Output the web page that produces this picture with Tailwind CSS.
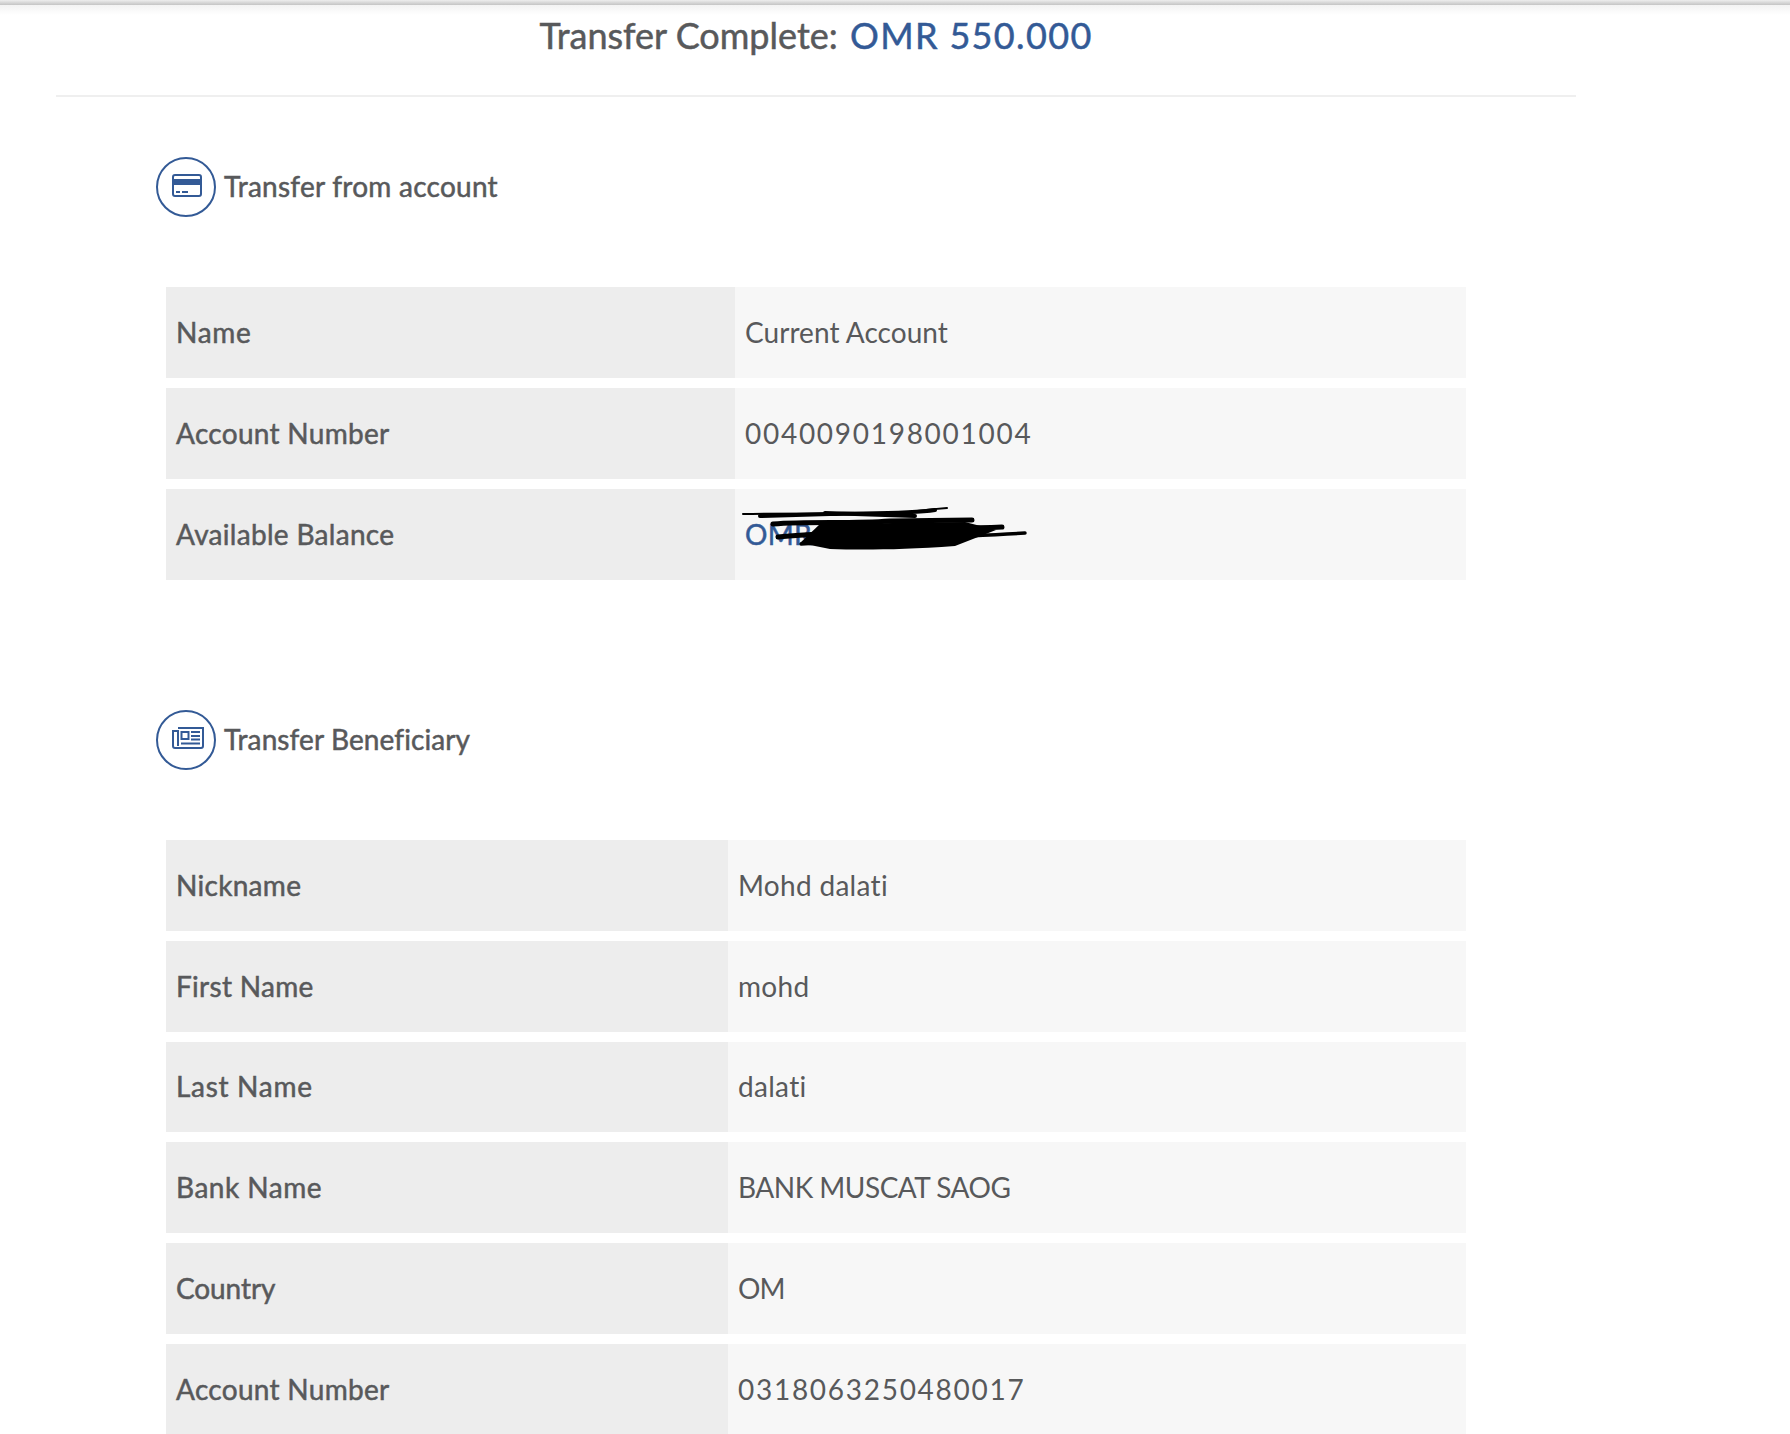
<!DOCTYPE html>
<html lang="en">
<head>
  <meta charset="UTF-8" />
  <title>Transfer Complete</title>
  <script src="https://cdn.jsdelivr.net/npm/@tailwindcss/browser@4"></script>
</head>
<body class="bg-white h-[1434px] overflow-hidden font-['Lato',sans-serif] text-[#58595b] [font-variant-ligatures:none]">

  <div class="h-[5px] bg-gradient-to-b from-[#eeeeee] to-[#c4c4c4]"></div>
  <div class="h-[10px] -mb-[10px] bg-gradient-to-b from-[#f3f3f3] to-white"></div>

  <div class="w-[1520px] ml-[56px]">
    <h1 class="h-[92px] border-b-2 border-[#efefef] pt-[3px] text-center text-[36px] leading-[54px] [-webkit-text-stroke:0.5px]">
      Transfer Complete: <span class="text-[#335a96] tracking-[1.35px] ml-[3px]">OMR 550.000</span>
    </h1>
  </div>

  <section class="ml-[156px] mt-[60px] flex items-center gap-[8px] h-[60px]">
    <span class="w-[60px] h-[60px] rounded-full border-2 border-[#335a96] flex items-center justify-center">
      <svg width="32" height="25" viewBox="0 0 32 25" class="ml-[2px] -mt-[3px]">
        <rect x="2" y="2" width="28" height="21" rx="2" fill="none" stroke="#335a96" stroke-width="2"/>
        <rect x="2" y="6" width="28" height="6" fill="#335a96"/>
        <rect x="5" y="18" width="4" height="2" fill="#335a96"/>
        <rect x="11" y="18" width="6" height="2" fill="#335a96"/>
      </svg>
    </span>
    <h2 class="text-[28px] tracking-[0.25px] pb-[2px] [-webkit-text-stroke:0.5px]">Transfer from account</h2>
  </section>

  <div class="ml-[166px] w-[1300px] mt-[70px] flex flex-col gap-[10px] text-[28px] tracking-[0.3px]">
    <div class="flex h-[91px] bg-[#f7f7f7] items-center">
      <div class="w-[569px] h-full bg-[#ededed] flex items-center px-[10px] pb-[2px] tracking-[0.7px] [-webkit-text-stroke:0.5px]">Name</div>
      <div class="px-[10px] pb-[2px] tracking-[0.05px]">Current Account</div>
    </div>
    <div class="flex h-[91px] bg-[#f7f7f7] items-center">
      <div class="w-[569px] h-full bg-[#ededed] flex items-center px-[10px] pb-[2px] [-webkit-text-stroke:0.5px]">Account Number</div>
      <div class="px-[10px] pb-[2px] tracking-[1.72px]">0040090198001004</div>
    </div>
    <div class="flex h-[91px] bg-[#f7f7f7] items-center relative">
      <div class="w-[569px] h-full bg-[#ededed] flex items-center px-[10px] pb-[2px] [-webkit-text-stroke:0.5px]">Available Balance</div>
      <div class="px-[10px] pb-[2px] text-[#335a96] [-webkit-text-stroke:0.5px]">OMR</div>
      <!-- hand-drawn redaction over the balance -->
      <svg class="absolute left-[534px] top-[-9px]" width="360" height="110" viewBox="0 0 360 110" fill="none" stroke="#000" stroke-linecap="round">
        <path d="M43 34 C90 33 150 34 200 33 C215 31 235 29 247 28" stroke-width="2"/>
        <path d="M60 36 L130 34 C170 33 210 34 235 30" stroke-width="4"/>
        <path d="M125 33 L215 36" stroke-width="4"/>
        <path d="M73 44 C110 41 150 44 190 41 L272 40" stroke-width="5"/>
        <path d="M78 57 C130 52 220 50 302 47" stroke-width="5"/>
        <path d="M101 64 C160 60 240 58 325 53" stroke-width="3.5"/>
        <path d="M120 44 L265 42 L296 50 L255 66 C200 70 160 70 130 69 L100 63 Z" fill="#000" stroke="none"/>
      </svg>
    </div>
  </div>

  <section class="ml-[156px] mt-[130px] flex items-center gap-[8px] h-[60px]">
    <span class="w-[60px] h-[60px] rounded-full border-2 border-[#335a96] flex items-center justify-center">
      <svg width="32" height="22" viewBox="0 0 32 22" class="ml-[3px] -mt-[5px]" fill="none" stroke="#335a96" stroke-width="2">
        <path d="M6 1 H31 V19 C31 20 30 21 29 21 H3 C2 21 1 20 1 19 V4 H6 V19"/>
        <rect x="9.5" y="5" width="7" height="7"/>
        <path d="M19 5 H28 M19 9 H28 M19 12.5 H28 M9 16.500 H28"/>
      </svg>
    </span>
    <h2 class="text-[28px] tracking-[0.1px] pb-[2px] [-webkit-text-stroke:0.5px]">Transfer Beneficiary</h2>
  </section>

  <div class="ml-[166px] w-[1300px] mt-[70px] flex flex-col gap-[10px] text-[28px] tracking-[0.3px]">
    <div class="flex h-[90.8px] bg-[#f7f7f7] items-center">
      <div class="w-[562px] h-full bg-[#ededed] flex items-center px-[10px] [-webkit-text-stroke:0.5px]">Nickname</div>
      <div class="px-[10px]">Mohd dalati</div>
    </div>
    <div class="flex h-[90.8px] bg-[#f7f7f7] items-center">
      <div class="w-[562px] h-full bg-[#ededed] flex items-center px-[10px] [-webkit-text-stroke:0.5px]">First Name</div>
      <div class="px-[10px]">mohd</div>
    </div>
    <div class="flex h-[90.8px] bg-[#f7f7f7] items-center">
      <div class="w-[562px] h-full bg-[#ededed] flex items-center px-[10px] pb-[2px] tracking-[0.7px] [-webkit-text-stroke:0.5px]">Last Name</div>
      <div class="px-[10px] pb-[2px]">dalati</div>
    </div>
    <div class="flex h-[90.8px] bg-[#f7f7f7] items-center">
      <div class="w-[562px] h-full bg-[#ededed] flex items-center px-[10px] pb-[2px] tracking-[0.5px] [-webkit-text-stroke:0.5px]">Bank Name</div>
      <div class="px-[10px] pb-[2px] tracking-[-0.5px]">BANK MUSCAT SAOG</div>
    </div>
    <div class="flex h-[90.8px] bg-[#f7f7f7] items-center">
      <div class="w-[562px] h-full bg-[#ededed] flex items-center px-[10px] pb-[2px] tracking-[-0.1px] [-webkit-text-stroke:0.5px]">Country</div>
      <div class="px-[10px] pb-[2px] tracking-[-1px]">OM</div>
    </div>
    <div class="flex h-[90.8px] bg-[#f7f7f7] items-center">
      <div class="w-[562px] h-full bg-[#ededed] flex items-center px-[10px] [-webkit-text-stroke:0.5px]">Account Number</div>
      <div class="px-[10px] tracking-[1.72px]">0318063250480017</div>
    </div>
  </div>

</body>
</html>
